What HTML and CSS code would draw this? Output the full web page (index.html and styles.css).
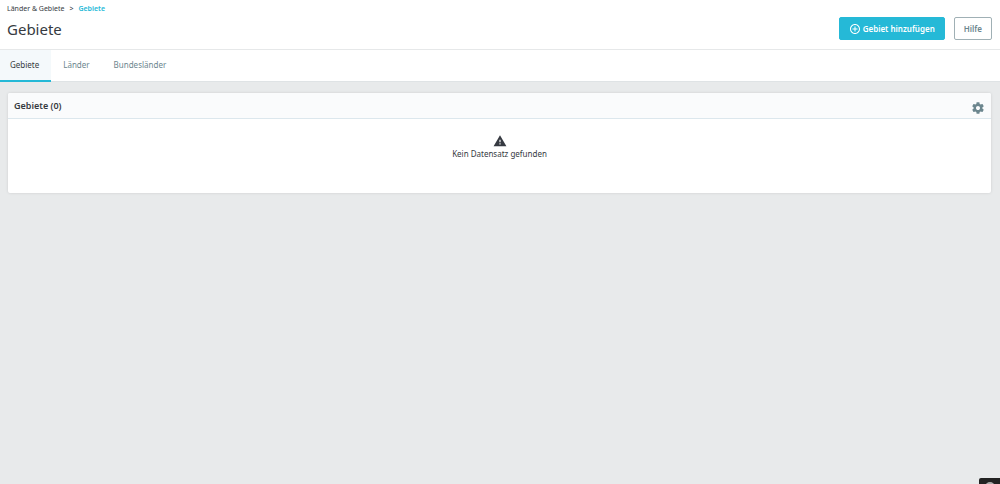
FILE: index.html
```html
<!DOCTYPE html>
<html lang="de">
<head>
    <meta charset="UTF-8">
    <meta name="viewport" content="width=device-width, initial-scale=1.0">
    <title>Gebiete</title>
    <link rel="stylesheet" href="styles.css">
</head>
<body>
    <header class="page-head">
        <div>
            <nav class="breadcrumb" aria-label="Pfad">
                <span>Länder &amp; Gebiete</span>
                <span>&gt;</span>
                <a href="#">Gebiete</a>
            </nav>
            <h1>Gebiete</h1>
        </div>
        <div class="actions">
            <button type="button" class="btn btn-primary">
                <svg width="12" height="12" viewBox="0 0 24 24" aria-hidden="true">
                    <path fill="currentColor" d="M13 7h-2v4H7v2h4v4h2v-4h4v-2h-4V7zm-1-5C6.480 2 2 6.480 2 12s4.480 10 10 10 10-4.480 10-10S17.520 2 12 2zm0 18c-4.410 0-8-3.590-8-8s3.590-8 8-8 8 3.590 8 8-3.590 8-8 8z"/>
                </svg>
                Gebiet hinzufügen
            </button>
            <button type="button" class="btn btn-outline">Hilfe</button>
        </div>
    </header>

    <nav class="tabs">
        <a href="#" class="tab active">Gebiete</a>
        <a href="#" class="tab">Länder</a>
        <a href="#" class="tab">Bundesländer</a>
    </nav>

    <main>
        <section class="panel">
            <div class="panel-head">
                <h2>Gebiete (0)</h2>
                <button type="button" class="settings" aria-label="Einstellungen">
                    <svg width="14" height="14" viewBox="0 0 24 24" aria-hidden="true">
                        <path fill="currentColor" d="M19.430 12.980c.04-.32.07-.64.07-.98s-.03-.66-.07-.98l2.110-1.650c.19-.15.24-.42.12-.64l-2-3.460c-.12-.22-.39-.3-.61-.22l-2.490 1c-.52-.4-1.080-.73-1.690-.98l-.38-2.650C14.460 2.180 14.250 2 14 2h-4c-.25 0-.46.18-.49.42l-.38 2.650c-.61.25-1.170.59-1.690.98l-2.490-1c-.23-.09-.49 0-.61.22l-2 3.460c-.13.22-.07.49.12.64l2.110 1.650c-.04.32-.07.65-.07.98s.03.66.07.98l-2.110 1.650c-.19.15-.24.42-.12.64l2 3.460c.12.22.39.3.61.22l2.490-1c.52.4 1.080.73 1.690.98l.38 2.650c.03.24.24.42.49.42h4c.25 0 .46-.18.49-.42l.38-2.650c.61-.25 1.170-.59 1.690-.98l2.490 1c.23.09.49 0 .61-.22l2-3.460c.12-.22.07-.49-.12-.64l-2.110-1.650zM12 15.500c-1.930 0-3.500-1.570-3.500-3.500s1.570-3.500 3.500-3.500 3.500 1.570 3.500 3.500-1.570 3.500-3.500 3.500z"/>
                    </svg>
                </button>
            </div>
            <div class="empty">
                <svg width="14" height="14" viewBox="0 0 24 24" aria-hidden="true">
                    <path fill="currentColor" d="M1 21h22L12 2 1 21zm12-3h-2v-2h2v2zm0-4h-2v-4h2v4z"/>
                </svg>
                <p>Kein Datensatz gefunden</p>
            </div>
        </section>
    </main>

    <button type="button" class="debug-toggle" aria-label="Debug">
        <svg width="12" height="12" viewBox="0 0 12 12" aria-hidden="true">
            <circle cx="6" cy="6" r="5" fill="#aaa"/>
        </svg>
    </button>
</body>
</html>
```

FILE: styles.css
```css
* {
    box-sizing: border-box;
}
body {
    margin: 0;
    min-height: 100vh;
    font-family: "Noto Sans", "Open Sans", sans-serif;
    font-size: 8px;
    color: #363a41;
    background: #e8eaeb;
}
h1, h2, p {
    margin: 0;
}
a {
    text-decoration: none;
}
button {
    font-family: inherit;
    cursor: pointer;
}
svg {
    display: block;
}
.page-head {
    display: flex;
    justify-content: space-between;
    align-items: flex-start;
    height: 50px;
    padding: 4px 8px 0 7px;
    background: #fff;
    border-bottom: 1px solid #e6e8e9;
}
.breadcrumb {
    display: flex;
    gap: 5px;
    font-size: 7px;
    line-height: 10px;
}
.breadcrumb a {
    color: #25b9d7;
    font-weight: 600;
}
h1 {
    margin-top: 4px;
    font-size: 15px;
    line-height: 22px;
    font-weight: 400;
}
.actions {
    display: flex;
    gap: 9px;
    padding-top: 13px;
}
.btn {
    display: flex;
    align-items: center;
    gap: 2px;
    height: 23px;
    padding: 0 9px;
    font-size: 8px;
    font-weight: 600;
    border: 1px solid #25b9d7;
    border-radius: 2px;
}
.btn-primary {
    color: #fff;
    background: #25b9d7;
}
.btn-outline {
    color: #6c868e;
    background: #fff;
    border-color: #a0b0b5;
}
.tabs {
    display: flex;
    height: 32px;
    background: #fff;
    border-bottom: 1px solid #dfe3e5;
}
.tab {
    padding: 0 12px;
    line-height: 30px;
    color: #6c868e;
}
.tab.active {
    height: 32px;
    padding: 0 12px 0 10px;
    color: #363a41;
    background: #f4f9fb;
    border-bottom: 2px solid #25b9d7;
}
main {
    padding: 11px 9px 11px 8px;
}
.panel {
    background: #fff;
    border-radius: 2px;
    box-shadow: 0 0 3px rgba(0, 0, 0, 0.12);
}
.panel-head {
    display: flex;
    justify-content: space-between;
    align-items: center;
    height: 26px;
    padding: 0 6px;
    background: #fafbfc;
    border-bottom: 1px solid #dce7ed;
    border-radius: 2px 2px 0 0;
}
h2 {
    font-size: 9px;
    font-weight: 600;
}
.settings {
    padding: 4px 0 0;
    color: #6c868e;
    background: none;
    border: 0;
}
.empty {
    display: flex;
    flex-direction: column;
    align-items: center;
    padding: 15px 0 33px;
    line-height: 12px;
}
.debug-toggle {
    position: fixed;
    right: 0;
    bottom: 0;
    width: 21px;
    height: 6px;
    padding: 3px 0 0 5px;
    overflow: hidden;
    background: #222;
    border: 0;
    border-radius: 2px 0 0 0;
}
```
